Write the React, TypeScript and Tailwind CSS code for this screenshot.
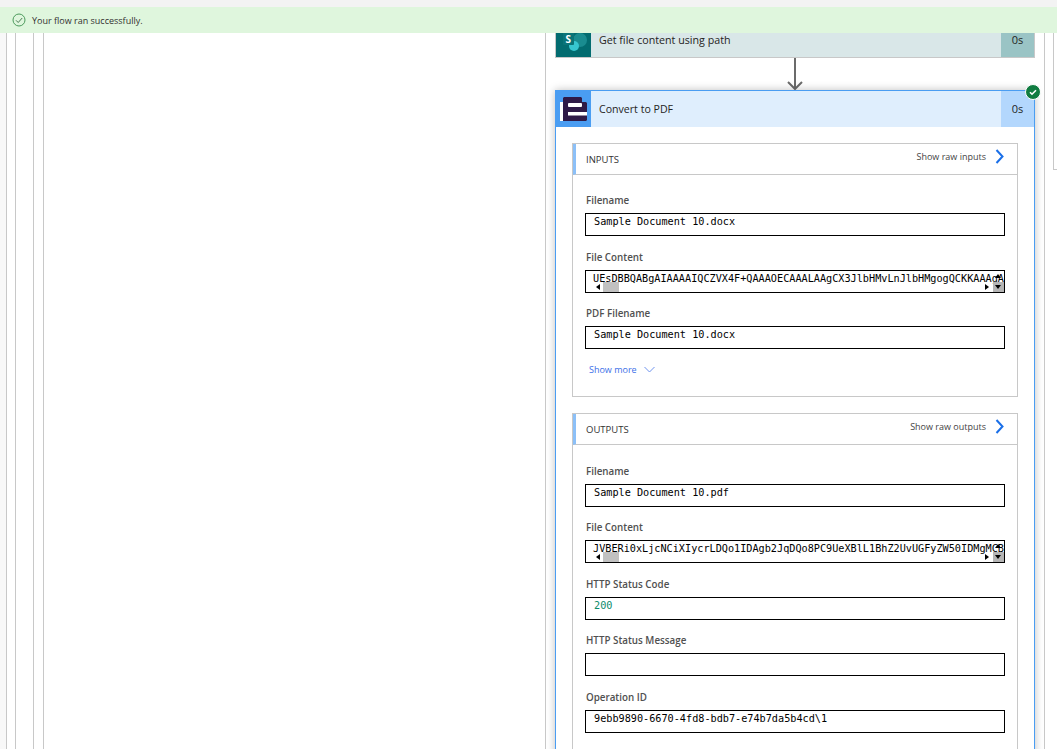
const sans = "font-['Open_Sans','Noto_Sans',sans-serif]"

function Scrollbars() {
  return (
    <>
      <div className="absolute left-[10px] top-[13px] w-0 h-0 border-y-[3px] border-y-transparent border-r-[4px] border-r-black" />
      <div className="absolute left-[17px] top-[11px] w-[16px] h-[10px] bg-[#c1c1c1]" />
      <div className="absolute right-[15px] top-[13px] w-0 h-0 border-y-[3px] border-y-transparent border-l-[4px] border-l-black" />
      <div className="absolute right-0 top-[11px] w-[11px] h-[10px] bg-[#b5b5b5]" />
      <div className="absolute right-[3px] top-[3px] w-0 h-0 border-x-[3px] border-x-transparent border-b-[4px] border-b-black" />
      <div className="absolute right-[3px] top-[14px] w-0 h-0 border-x-[3px] border-x-transparent border-t-[4px] border-t-black" />
    </>
  )
}

function Field({ label, value, scroll, green }: { label: string; value?: string; scroll?: boolean; green?: boolean }) {
  return (
    <div className="h-[56.5px]">
      <div className="h-[16px] mb-[5px] pl-[1px] pt-[1px] text-[9.8px] leading-[15px] font-semibold text-[#505050]">{label}</div>
      <div className="relative h-[23px] border border-black bg-white overflow-hidden">
        <div
          className={`font-['DejaVu_Sans_Mono',monospace] text-[10.2px] leading-[13px] pt-[1px] whitespace-nowrap ${scroll ? "pl-[7px]" : "pl-[8px]"} ${green ? "text-[#0b8a6a]" : "text-black"}`}
        >
          {value}
        </div>
        {scroll && <Scrollbars />}
      </div>
    </div>
  )
}

function SectionHeader({ title, raw }: { title: string; raw: string }) {
  return (
    <div className="flex justify-between h-[31px] border-b border-[#c8c8c8] border-l-[3px] border-l-[#8cc0f8] pl-[10px] pr-[13px]">
      <span className="text-[9.5px] leading-[14px] pt-[9px] text-[#333]">{title}</span>
      <span className="flex items-start gap-[9px] pt-[5px]">
        <span className="pt-[1px] text-[9px] leading-[14px] text-[#444]">{raw}</span>
        <svg width="9" height="15" viewBox="0 0 9 15" fill="none" stroke="#1a6fe8" strokeWidth="2">
          <path d="M1.5 1l6 6.5-6 6.5" />
        </svg>
      </span>
    </div>
  )
}

export default function App() {
  return (
    <div className={`relative w-screen h-screen overflow-hidden bg-white ${sans}`}>
      <div className="h-[7px] bg-[#f3f3f3]" />
      <div className="absolute left-0 right-0 top-[7px] h-[26px] z-10 bg-[#dff6dd] flex items-center pl-[12px] gap-[6px]">
        <svg width="14" height="14" viewBox="0 0 14 14" fill="none">
          <circle cx="7" cy="7" r="6" stroke="#4c9a5c" strokeWidth="1" />
          <path d="M4 7.3l2.2 2.2L10.2 5" stroke="#4c7a55" strokeWidth="1" />
        </svg>
        <span className="pt-[1px] text-[9px] text-[#323130]">Your flow ran successfully.</span>
      </div>

      <div className="flex h-[742px]">
        <div className="w-[6px] bg-[#f8f8f8]" />
        <div className="w-[9px] border-l border-[#c8c8c8]" />
        <div className="w-[18px] border-l border-[#c8c8c8]" />
        <div className="w-[10px] border-l border-[#c8c8c8]" />
        <div className="w-[502px] border-l border-[#c8c8c8]" />
        <div className="w-[499px] border-l border-[#c8c8c8] pl-[9px] pt-[15px] overflow-hidden">
          <div className="w-[480px] h-[36px] flex border border-t-0 border-[#c8c8c8] bg-[#d9e7e8]">
            <div className="w-[35px] h-[35px] bg-[#036c70]">
              <svg width="35" height="35" viewBox="0 0 35 35">
                <circle cx="24" cy="18" r="7" fill="#1a8c90" />
                <circle cx="18" cy="24" r="5" fill="#37c6d0" />
                <rect x="7" y="8" width="11" height="15" rx="1" fill="#0a7478" />
                <text x="9.5" y="21" fontSize="10" fontWeight="700" fill="#fff">S</text>
              </svg>
            </div>
            <div className="flex-1 pl-[8px] pt-[1px] text-[10.7px] leading-[35px] text-[#252423]">Get file content using path</div>
            <div className="w-[33px] bg-[#9ac4c5] text-center text-[11px] leading-[35px] text-[#252423]">0s</div>
          </div>

          <div className="w-[480px] h-[32px] flex justify-center">
            <svg width="16" height="32" viewBox="0 0 16 32" fill="none" stroke="#6b6b6b" strokeWidth="2">
              <path d="M8 0v31M1 24l7 7 7-7" />
            </svg>
          </div>

          <div className="relative w-[480px] h-[700px] border border-[#4a9df2] bg-white shadow-[0_0_8px_rgba(0,0,0,0.25)]">
            <div className="absolute -right-[7px] -top-[7px] w-[16px] h-[16px] rounded-full bg-[#107c41] border border-white flex items-center justify-center">
              <svg width="10" height="10" viewBox="0 0 10 10" fill="none" stroke="#fff" strokeWidth="1.6">
                <path d="M2 5.2l2 2 4-4" />
              </svg>
            </div>
            <div className="flex h-[36px] bg-[#dfeefd]">
              <div className="w-[35px] bg-[#4a9df2]">
                <svg width="35" height="36" viewBox="0 0 35 36">
                  <path d="M8 6h17l1 1v4h4l1 1v17l-1 1H7V7z" fill="#2f1a47" />
                  <rect x="4" y="11" width="3" height="19" fill="#fff" />
                  <rect x="12" y="12" width="14" height="4" rx="1" fill="#fff" />
                  <rect x="12" y="21" width="19" height="3.5" fill="#fff" />
                </svg>
              </div>
              <div className="flex-1 pl-[8px] text-[10.6px] leading-[36px] text-[#252423]">Convert to PDF</div>
              <div className="w-[33px] bg-[#b3d7fd] text-center text-[11px] leading-[36px] text-[#252423]">0s</div>
            </div>

            <div className="px-[16px] pt-[16px]">
              <div className="h-[254px] border border-[#c8c8c8]">
                <SectionHeader title="INPUTS" raw="Show raw inputs" />
                <div className="pl-[12px] pr-[12px] pt-[17px]">
                  <Field label="Filename" value="Sample Document 10.docx" />
                  <Field label="File Content" value="UEsDBBQABgAIAAAAIQCZVX4F+QAAAOECAAALAAgCX3JlbHMvLnJlbHMgogQCKKAAAgA" scroll />
                  <Field label="PDF Filename" value="Sample Document 10.docx" />
                  <div className="mt-[1px] flex items-center gap-[7px] pl-[4px] text-[9px] leading-[14px] text-[#3d6fe8]">
                    Show more
                    <svg width="11" height="7" viewBox="0 0 11 7" fill="none" stroke="#6f93ee" strokeWidth="1">
                      <path d="M0.5 1l5 5 5-5" />
                    </svg>
                  </div>
                </div>
              </div>

              <div className="mt-[16px] h-[400px] border border-[#c8c8c8]">
                <SectionHeader title="OUTPUTS" raw="Show raw outputs" />
                <div className="pl-[12px] pr-[12px] pt-[17.9px]">
                  <Field label="Filename" value="Sample Document 10.pdf" />
                  <Field label="File Content" value="JVBERi0xLjcNCiXIycrLDQo1IDAgb2JqDQo8PC9UeXBlL1BhZ2UvUGFyZW50IDMgMCB" scroll />
                  <Field label="HTTP Status Code" value="200" green />
                  <Field label="HTTP Status Message" />
                  <Field label="Operation ID" value="9ebb9890-6670-4fd8-bdb7-e74b7da5b4cd\1" />
                </div>
              </div>
            </div>
          </div>
        </div>
        <div className="w-[9px] border-l border-[#c8c8c8]" />
        <div className="flex-1 h-[163px] border-l border-b border-[#c8c8c8]" />
      </div>
    </div>
  )
}
